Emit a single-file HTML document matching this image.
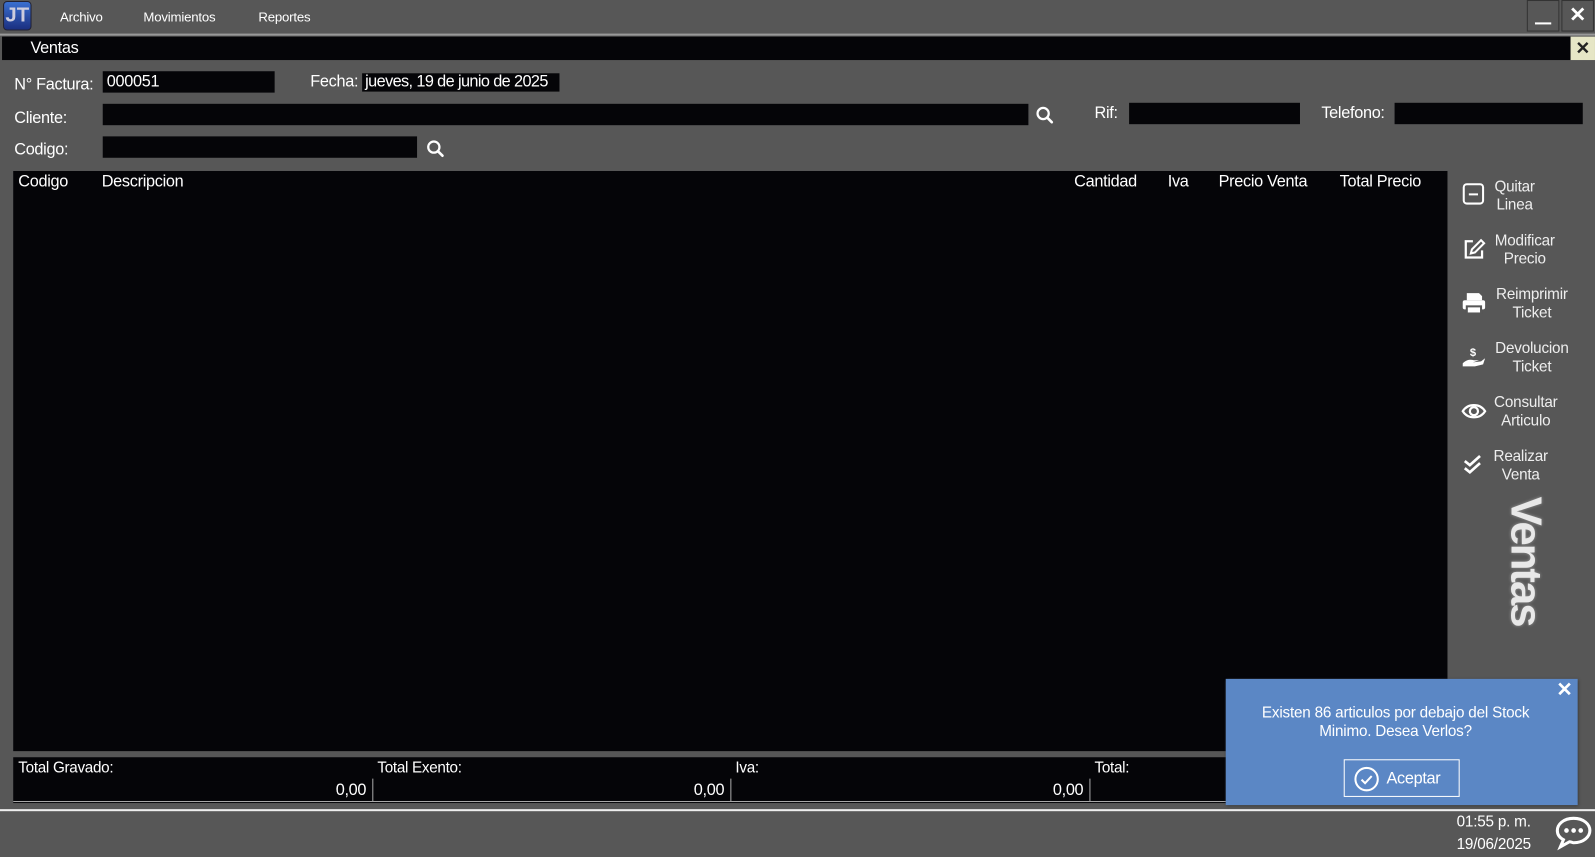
<!DOCTYPE html>
<html><head><meta charset="utf-8"><style>
*{margin:0;padding:0;box-sizing:border-box}
html,body{width:1595px;height:857px;overflow:hidden;background:#575757}
#w{position:absolute;left:0;top:0;width:1568px;height:842px;transform:scale(1.0172,1.0178);transform-origin:0 0;font-family:"Liberation Sans",sans-serif;color:#fff}
.a{position:absolute;white-space:nowrap}
.b{position:absolute;background:#050508}
.l{font-size:16px;letter-spacing:-0.3px}
.sb{position:absolute;left:1436px;width:120px;height:40px}
.sb svg{position:absolute;left:0;top:0}
.sb div{position:absolute;left:28px;width:80px;text-align:center;font-size:15px;line-height:18px;color:#eee;letter-spacing:-0.2px}
</style></head><body><div id="w">
<div class="a" style="left:3px;top:1px;width:28px;height:29px;border-radius:4px;background:linear-gradient(#3a6fd0,#1b2f80);border:1px solid #223;font:bold 20px 'Liberation Sans';color:#ccd;text-align:center;line-height:27px">JT</div>
<div class="a" style="left:59px;top:9px;font-size:13px;letter-spacing:-0.2px">Archivo</div>
<div class="a" style="left:141px;top:9px;font-size:13px;letter-spacing:-0.2px">Movimientos</div>
<div class="a" style="left:254px;top:9px;font-size:13px;letter-spacing:-0.2px">Reportes</div>
<div class="a" style="left:1501px;top:0;width:32px;height:31px;border:1px solid #333"><div class="a" style="left:7px;top:21px;width:16px;height:2px;background:#fff"></div></div>
<div class="a" style="left:1535px;top:0;width:32px;height:31px;border:1px solid #333;font:bold 20px 'Liberation Sans';text-align:center;line-height:29px">✕</div>
<div class="a" style="left:0;top:33px;width:1568px;height:2px;background:#999"></div>
<div class="b" style="left:2px;top:36px;width:1542px;height:23px"></div>
<div class="a" style="left:30px;top:39px;font-size:16px;letter-spacing:-0.3px">Ventas</div>
<div class="a" style="left:1544px;top:36px;width:24px;height:23px;background:#e6e6c6;color:#222;font:bold 17px 'Liberation Sans';text-align:center;line-height:23px">✕</div>
<div class="a l" style="left:14px;top:75px">N° Factura:</div>
<div class="b" style="left:101px;top:70px;width:169px;height:21px"></div>
<div class="a l" style="left:105px;top:72px">000051</div>
<div class="a l" style="left:305px;top:72px">Fecha:</div>
<div class="b" style="left:356px;top:72px;width:194px;height:18px"></div>
<div class="a l" style="left:359px;top:72px;letter-spacing:-0.6px">jueves, 19 de junio de 2025</div>
<div class="a l" style="left:14px;top:108px">Cliente:</div>
<div class="b" style="left:101px;top:102px;width:910px;height:21px"></div>
<svg class="a" style="left:1018px;top:104px" width="18" height="18" viewBox="0 0 18 18"><circle cx="7.5" cy="7.5" r="5.5" fill="none" stroke="#fff" stroke-width="2.2"/><path d="M11.5 11.5L16 16" stroke="#fff" stroke-width="2.6" stroke-linecap="round"/></svg>
<div class="a l" style="left:1076px;top:103px">Rif:</div>
<div class="b" style="left:1110px;top:101px;width:168px;height:21px"></div>
<div class="a l" style="left:1299px;top:103px">Telefono:</div>
<div class="b" style="left:1371px;top:101px;width:185px;height:21px"></div>
<div class="a l" style="left:14px;top:139px">Codigo:</div>
<div class="b" style="left:101px;top:134px;width:309px;height:21px"></div>
<svg class="a" style="left:419px;top:137px" width="18" height="18" viewBox="0 0 18 18"><circle cx="7.5" cy="7.5" r="5.5" fill="none" stroke="#fff" stroke-width="2.2"/><path d="M11.5 11.5L16 16" stroke="#fff" stroke-width="2.6" stroke-linecap="round"/></svg>
<div class="b" style="left:13px;top:168px;width:1410px;height:570px"></div>
<div class="a l" style="left:18px;top:170px">Codigo</div>
<div class="a l" style="left:100px;top:170px">Descripcion</div>
<div class="a l" style="left:1056px;top:170px">Cantidad</div>
<div class="a l" style="left:1148px;top:170px">Iva</div>
<div class="a l" style="left:1198px;top:170px">Precio Venta</div>
<div class="a l" style="left:1317px;top:170px">Total Precio</div>
<div class="b" style="left:13px;top:744px;width:1410px;height:45px"></div>
<div class="a" style="left:13px;top:787px;width:1410px;height:1px;background:#aaa"></div>
<div class="a" style="left:366px;top:765px;width:1px;height:22px;background:#aaa"></div>
<div class="a" style="left:718px;top:765px;width:1px;height:22px;background:#aaa"></div>
<div class="a" style="left:1071px;top:765px;width:1px;height:22px;background:#aaa"></div>
<div class="a l" style="left:18px;top:746px;font-size:15px">Total Gravado:</div>
<div class="a l" style="left:371px;top:746px;font-size:15px">Total Exento:</div>
<div class="a l" style="left:723px;top:746px;font-size:15px">Iva:</div>
<div class="a l" style="left:1076px;top:746px;font-size:15px">Total:</div>
<div class="a l" style="left:300px;top:768px;width:60px;text-align:right">0,00</div>
<div class="a l" style="left:652px;top:768px;width:60px;text-align:right">0,00</div>
<div class="a l" style="left:1005px;top:768px;width:60px;text-align:right">0,00</div>
<div class="a" style="left:0;top:795px;width:1568px;height:2px;background:#eee"></div>
<div class="sb" style="top:176px"><svg width="26" height="30" viewBox="0 0 26 30"><rect x="3" y="5" width="19" height="19" rx="3" fill="none" stroke="#fff" stroke-width="2"/><path d="M8 15h9" stroke="#fff" stroke-width="2"/></svg><div style="top:-1px;width:50px">Quitar Linea</div></div>
<div class="sb" style="top:229px"><svg width="26" height="30" viewBox="0 0 26 30"><path d="M12 8H5v16h16v-7" fill="none" stroke="#fff" stroke-width="2.2"/><path d="M10 20l1-4 9-9 3 3-9 9z" fill="none" stroke="#fff" stroke-width="2"/></svg><div style="top:-1px;width:70px">Modificar Precio</div></div>
<div class="sb" style="top:282px"><svg width="26" height="30" viewBox="0 0 26 30"><path d="M6 6h12l3 3v4H6z" fill="#fff"/><rect x="2" y="13" width="22" height="9" rx="2" fill="#fff"/><rect x="6" y="19" width="14" height="7" fill="#fff" stroke="#575757" stroke-width="2"/></svg><div style="top:-1px;width:84px">Reimprimir Ticket</div></div>
<div class="sb" style="top:335px"><svg width="26" height="30" viewBox="0 0 26 30"><text x="9" y="15" font-size="11" font-weight="bold" fill="#fff" font-family="Liberation Sans">$</text><path d="M2 22c4-4 8-4 11-3h5l-6 2 8-1 4-3-2 6-8 2H2z" fill="#fff"/></svg><div style="top:-1px;width:84px">Devolucion Ticket</div></div>
<div class="sb" style="top:388px"><svg width="26" height="30" viewBox="0 0 26 30"><path d="M2 16c5-8 17-8 22 0-5 8-17 8-22 0z" fill="none" stroke="#fff" stroke-width="2.2"/><circle cx="13" cy="16" r="4" fill="none" stroke="#fff" stroke-width="2.2"/></svg><div style="top:-1px;width:72px">Consultar Articulo</div></div>
<div class="sb" style="top:441px"><svg width="26" height="30" viewBox="0 0 26 30"><path d="M4 12l5 4 10-9M4 19l5 4 10-9" fill="none" stroke="#fff" stroke-width="2.6"/></svg><div style="top:-1px;width:62px">Realizar Venta</div></div>
<div class="a" style="left:1480px;top:488px;transform-origin:0 0;transform:translate(44px,0) rotate(90deg);font:bold 43px 'Liberation Sans';color:#e8e8e8;text-shadow:0 0 3px #999;letter-spacing:-2px">Ventas</div>
<div class="a" style="left:1205px;top:667px;width:346px;height:124px;background:#5b87c5;box-shadow:1px 1px 3px #333"></div>
<div class="a" style="left:1530px;top:667px;font:bold 19px 'Liberation Sans'">✕</div>
<div class="a" style="left:1226px;top:692px;width:292px;text-align:center;font-size:15px;line-height:18px;white-space:normal;letter-spacing:-0.2px">Existen 86 articulos por debajo del Stock Minimo. Desea Verlos?</div>
<div class="a" style="left:1321px;top:746px;width:114px;height:37px;border:1px solid #fff"></div>
<svg class="a" style="left:1331px;top:753px" width="25" height="25" viewBox="0 0 25 25"><circle cx="12.5" cy="12.5" r="11" fill="none" stroke="#fff" stroke-width="2"/><path d="M7.5 13l3.5 3.5 6.5-7" fill="none" stroke="#fff" stroke-width="2"/></svg>
<div class="a" style="left:1363px;top:757px;font-size:16px;letter-spacing:-0.3px">Aceptar</div>
<div class="a" style="left:1432px;top:799px;font-size:15px;letter-spacing:-0.2px">01:55 p. m.</div>
<div class="a" style="left:1432px;top:821px;font-size:15px;letter-spacing:-0.2px">19/06/2025</div>
<svg class="a" style="left:1528px;top:800px" width="38" height="36" viewBox="0 0 38 36"><path d="M19 4C9 4 3 10 3 16c0 4 2 7 6 9l-3 7 9-5c1 0 3 1 4 1 10 0 16-6 16-12S29 4 19 4z" fill="none" stroke="#fff" stroke-width="3"/><circle cx="12" cy="16" r="2.3" fill="#fff"/><circle cx="19" cy="16" r="2.3" fill="#fff"/><circle cx="26" cy="16" r="2.3" fill="#fff"/></svg>
</div></body></html>
